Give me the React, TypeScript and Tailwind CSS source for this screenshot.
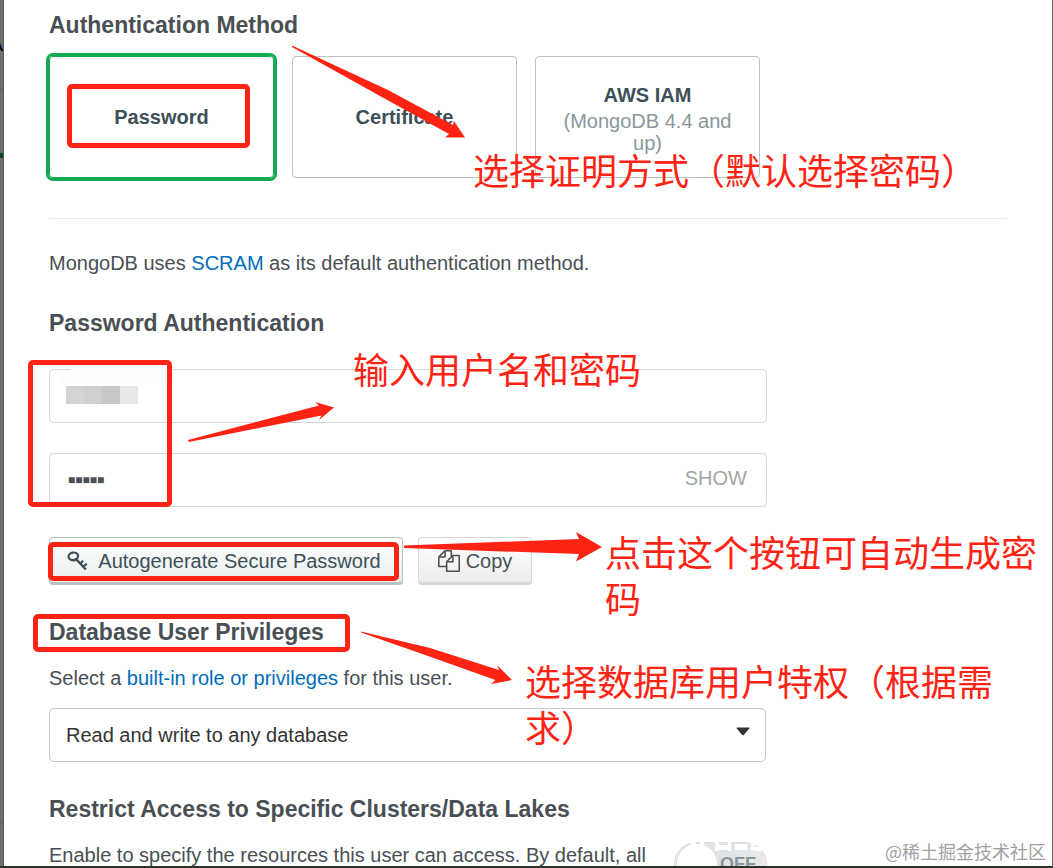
import { useState } from "react";
import type { ReactNode } from "react";

type Method = "password" | "certificate" | "aws";

const methods: { id: Method; label: string; note?: string }[] = [
  { id: "password", label: "Password" },
  { id: "certificate", label: "Certificate" },
  { id: "aws", label: "AWS IAM", note: "(MongoDB 4.4 and up)" },
];

function KeyIcon() {
  return (
    <svg width="21" height="20" viewBox="0 0 21 20" fill="none" stroke="currentColor" aria-hidden="true">
      <ellipse cx="6.300" cy="5.300" rx="4.800" ry="3.700" transform="rotate(-12 6.300 5.300)" strokeWidth="2.200" />
      <path d="M4.500 8.800q3 1.400 5-.6" strokeWidth="2.200" />
      <path d="M9 8l9.800 10.500" strokeWidth="2.500" />
      <path d="M13.300 12.600l2.900-2.800M16.300 15.800l3.400-3.200" strokeWidth="2.200" />
    </svg>
  );
}

function CopyIcon() {
  return (
    <svg width="22" height="22" viewBox="0 0 1792 1792" fill="currentColor" aria-hidden="true">
      <path d="M1696 384q40 0 68 28t28 68v1216q0 40-28 68t-68 28h-960q-40 0-68-28t-28-68v-288h-544q-40 0-68-28t-28-68v-672q0-40 20-88t48-76l408-408q28-28 76-48t88-20h416q40 0 68 28t28 68v328q68-40 128-40h416zm-544 213l-299 299h299v-299zm-640-384l-299 299h299v-299zm196 647l316-316v-416h-384v416q0 40-28 68t-68 28h-416v640h512v-256q0-40 20-88t48-76zm956 804v-1152h-384v416q0 40-28 68t-68 28h-416v640h896z" />
    </svg>
  );
}

function Heading({ children }: { children: ReactNode }) {
  return <h2 className="text-[23px] leading-[30px] font-bold text-[#494f54]">{children}</h2>;
}

// hand-drawn notes lying over the form
function Annotations() {
  return (
    <div className="pointer-events-none absolute inset-0 overflow-hidden font-['Noto_Sans_CJK_SC',sans-serif] text-4xl leading-[46px] text-[#ff2314]">
      <div className="absolute left-[67px] top-[84px] h-16 w-[183px] rounded-[5px] border-5 border-[#ff2314]" />
      <div className="absolute left-7 top-[360px] h-[147px] w-36 rounded-[5px] border-5 border-[#ff2314]" />
      <div className="absolute left-12 top-[542px] h-[39px] w-[351px] rounded-[5px] border-5 border-[#ff2314]" />
      <div className="absolute left-[33px] top-[614px] h-[38px] w-[317px] rounded-[5px] border-5 border-[#ff2314]" />

      <svg className="absolute left-0 top-0" width="640" height="700" fill="currentColor" aria-hidden="true">
        <path d="M292 45.500L388 90L453 125L454 121L465 137.500L445 137.500L449 134L380 96L292 47Z" />
        <path d="M188 440L319 405.500L315 402L334 407.500L319 420L321.500 415.500L189 442Z" />
        <path d="M404 545.500L579 539L576 532L602 547L576 561.500L579 554L404 548Z" />
        <path d="M361 631.500L430 648L499 670L497 665L512 680L491 684L495.500 680L428 656L361 632.500Z" />
      </svg>

      <p className="absolute left-[473px] top-[146px] whitespace-nowrap">选择证明方式（默认选择密码）</p>
      <p className="absolute left-[353px] top-[345px] whitespace-nowrap">输入用户名和密码</p>
      <p className="absolute left-[605px] top-[528px] w-[440px]">点击这个按钮可自动生成密码</p>
      <p className="absolute left-[525px] top-[657px] w-[480px]">
        选择数据库用户特权（根据需
        <br />
        求）
      </p>
    </div>
  );
}

export default function App() {
  const [method, setMethod] = useState<Method>("password");
  const [username, setUsername] = useState("");
  const [password, setPassword] = useState("admin");
  const [visible, setVisible] = useState(false);
  const [restricted, setRestricted] = useState(false);

  return (
    <div className="relative flex h-screen overflow-hidden border-r border-b-2 border-r-[#666666] border-b-[#2b3327] bg-white font-['Liberation_Sans',Arial,sans-serif] text-xl text-[#494f54]">
      {/* page behind the dialog */}
      <div className="flex w-1 shrink-0 flex-col overflow-hidden border-r border-[#5c5a59] bg-[#716f6d]">
        <div className="flex h-[89px] justify-end pt-[30px] text-black">A</div>
        <div className="h-16 border-t border-[#5f5d5c]" />
        <div className="h-[5px] bg-[#0b4a20]" />
        <div className="h-[665px] border-b border-[#5f5d5c]" />
      </div>

      <main className="min-w-0 grow px-[45px] pt-2.5">
        <Heading>Authentication Method</Heading>
        <div className="mt-4 flex gap-[18px]">
          {methods.map((m) => (
            <button
              key={m.id}
              type="button"
              aria-pressed={method === m.id}
              onClick={() => setMethod(m.id)}
              className={
                "flex h-[122px] w-[225px] flex-col items-center justify-center rounded-[4px] border px-4 " +
                (method === m.id ? "border-[#13aa52] ring-3 ring-[#13aa52]" : "border-[#b8c4c2]")
              }>
              <span className="leading-[30px] font-bold text-[#3d4f58]">{m.label}</span>
              {m.note && <span className="leading-[22px] text-[#89979b]">{m.note}</span>}
            </button>
          ))}
        </div>

        <hr className="mt-10 border-[#e7eeec]" />

        <p className="mt-[29px] leading-[30px]">
          MongoDB uses{" "}
          <a href="#scram" className="text-[#006cbc]">
            SCRAM
          </a>{" "}
          as its default authentication method.
        </p>

        <div className="mt-[30px]">
          <Heading>Password Authentication</Heading>
        </div>
        <form className="mt-[31px] flex w-[718px] flex-col gap-[30px]" onSubmit={(e) => e.preventDefault()}>
          <div className="relative">
            <input
              aria-label="Username"
              value={username}
              onChange={(e) => setUsername(e.target.value)}
              className="h-[54px] w-full rounded-[4px] border border-[#d8d8d8] px-4"
            />
            {/* masked user name */}
            <div className="absolute -top-px left-3 h-4 w-28 rounded-tl-2xl bg-[#fcfefd]" />
            <div className="absolute left-[17px] top-[17px] flex h-[18px]">
              <div className="w-[18px] bg-[#d3d5d4]" />
              <div className="w-[18px] bg-[#cfcfd1]" />
              <div className="w-[18px] bg-[#c7c7c9]" />
              <div className="w-[18px] bg-[#e6e8e7]" />
            </div>
          </div>
          <div className="relative">
            <input
              aria-label="Password"
              type="text"
              autoComplete="off"
              value={password}
              onChange={(e) => setPassword(e.target.value)}
              className={
                "h-[54px] w-full rounded-[4px] border border-[#d8d8d8] pr-24 pl-[18px] " +
                (visible ? "" : "text-xs [-webkit-text-security:square]")
              }
            />
            <button
              type="button"
              onClick={() => setVisible(!visible)}
              className="absolute right-5 top-2.5 leading-[30px] text-[#a3a5a5]">
              SHOW
            </button>
          </div>
        </form>

        <div className="mt-[30px] flex gap-[15px]">
          <button
            type="button"
            className="flex h-12 w-[354px] items-center justify-center gap-2.5 rounded-[4px] border border-b-3 border-[#b8c4c2] bg-linear-to-b from-white to-[#e7eeec] pt-0.5 pr-1 text-[#3d4f58]">
            <KeyIcon />
            Autogenerate Secure Password
          </button>
          <button
            type="button"
            className="flex h-12 w-[114px] items-center justify-center gap-1.5 rounded-[4px] border border-b-3 border-[#d5d9d8] bg-linear-to-b from-white to-[#ececec] pt-0.5">
            <CopyIcon />
            Copy
          </button>
        </div>

        <div className="mt-8">
          <Heading>Database User Privileges</Heading>
        </div>
        <p className="mt-4 leading-[30px]">
          Select a{" "}
          <a href="#roles" className="text-[#006cbc]">
            built-in role or privileges
          </a>{" "}
          for this user.
        </p>
        <div className="relative mt-[15px] w-[717px]">
          <select
            aria-label="Database user privileges"
            className="h-[54px] w-full appearance-none rounded-[5px] border border-[#c7c7c7] bg-white px-4 text-[#333333]">
            <option>Read and write to any database</option>
            <option>Only read any database</option>
            <option>Atlas admin</option>
          </select>
          <svg
            className="pointer-events-none absolute right-4 top-[19px]"
            width="14"
            height="9"
            viewBox="0 0 14 9"
            fill="#333333"
            aria-hidden="true">
            <path d="M1 0.500h12q.8 0 .3 1L8 7.800q-1 1-2 0L.7 1.500q-.5-1 .3-1z" />
          </svg>
        </div>

        <div className="mt-8">
          <Heading>Restrict Access to Specific Clusters/Data Lakes</Heading>
        </div>
        <div className="mt-4 flex w-[718px] items-start justify-between">
          <p className="w-[610px] leading-[30px]">
            Enable to specify the resources this user can access. By default, all
          </p>
          <label className="relative mt-0.5 flex h-11 w-[93px] items-center rounded-full border border-[#dadddf] bg-linear-to-r from-[#eceeef] via-[#dfe2e4] to-[#e8eaec] p-px text-[#89979b]">
            <input
              type="checkbox"
              aria-label="Restrict access"
              checked={restricted}
              onChange={(e) => setRestricted(e.target.checked)}
              className="size-[42px] shrink-0 appearance-none rounded-full border border-[#e0e2e3] bg-white"
            />
            <span className="ml-0.5 text-lg font-bold">OFF</span>
            {/* faded traces of a second watermark */}
            <svg className="absolute left-4 -top-px" width="72" height="9" fill="#ffffff" aria-hidden="true">
              <path d="M0 0h5v3H0zM9 0h4v9H9zM24 0h4v9h-4zM28 3h9v5h-9zM37 0h3v9h-3zM44 2h12v6H44zM60 0h4v8h-4zM64 5h8v4h-8z" />
            </svg>
          </label>
        </div>
      </main>

      <Annotations />

      <p className="pointer-events-none absolute right-1.5 bottom-0 font-['Noto_Sans_CJK_SC',sans-serif] text-lg leading-[30px] text-[#a0a0a0]">
        @稀土掘金技术社区
      </p>
    </div>
  );
}
